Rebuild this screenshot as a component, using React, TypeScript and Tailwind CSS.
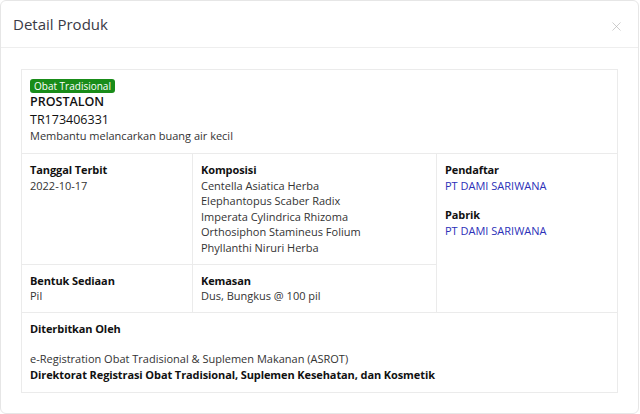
import { X } from "lucide-react";

const komposisi = [
  "Centella Asiatica Herba",
  "Elephantopus Scaber Radix",
  "Imperata Cylindrica Rhizoma",
  "Orthosiphon Stamineus Folium",
  "Phyllanthi Niruri Herba",
];

function Label({ children }: { children: React.ReactNode }) {
  return <p className="font-bold tracking-[-0.1px] text-[#111]">{children}</p>;
}

export default function App() {
  return (
    <div
      className="h-[414px] w-[640px] bg-white text-[#333]"
      style={{ fontFamily: "'Open Sans', 'Noto Sans', sans-serif" }}
    >
      <div className="flex h-[414px] w-[639px] flex-col rounded-md border border-[#e6e6e6] bg-white">
        <div className="flex h-[47px] items-center justify-between border-b border-[#eeeeee] pl-3 pr-[14px]">
          <h1 className="text-[15px] font-medium text-[#3a3a46]">Detail Produk</h1>
          <X size={15} strokeWidth={1} className="mt-[5px] text-[#b0b0b0]" />
        </div>

        <div className="px-5 pt-[21px]">
          <div className="grid grid-cols-[170px_243px_1fr] gap-px border border-[#ebebeb] bg-[#ebebeb] text-[11px] leading-[15.6px]">
            <div className="col-span-3 bg-white px-2 pb-[10px] pt-[9px]">
              <div className="w-fit rounded-[3px] bg-[#198c19] px-[4px] text-[10px] leading-[14px] text-white">
                Obat Tradisional
              </div>
              <p className="text-[12.5px] font-semibold leading-[18px] text-[#111]">PROSTALON</p>
              <p className="text-[12.5px] font-medium leading-[17px] text-[#111]">TR173406331</p>
              <p className="leading-[15px]">Membantu melancarkan buang air kecil</p>
            </div>

            <div className="bg-white px-2 py-2">
              <Label>Tanggal Terbit</Label>
              <p>2022-10-17</p>
            </div>
            <div className="bg-white px-2 py-2">
              <Label>Komposisi</Label>
              {komposisi.map((k) => (
                <p key={k}>{k}</p>
              ))}
            </div>
            <div className="row-span-2 bg-white px-2 py-2">
              <Label>Pendaftar</Label>
              <p className="text-[#2c30b8]">PT DAMI SARIWANA</p>
              <div className="mt-[14px]">
                <Label>Pabrik</Label>
                <p className="text-[#2c30b8]">PT DAMI SARIWANA</p>
              </div>
            </div>

            <div className="bg-white px-2 py-2">
              <Label>Bentuk Sediaan</Label>
              <p>Pil</p>
            </div>
            <div className="bg-white px-2 py-2">
              <Label>Kemasan</Label>
              <p>Dus, Bungkus @ 100 pil</p>
            </div>

            <div className="col-span-3 bg-white px-2 pb-[9px] pt-2">
              <Label>Diterbitkan Oleh</Label>
              <p className="mt-[15px]">e-Registration Obat Tradisional &amp; Suplemen Makanan (ASROT)</p>
              <Label>
                Direktorat Registrasi Obat Tradisional, Suplemen Kesehatan, dan Kosmetik
              </Label>
            </div>
          </div>
        </div>
      </div>
    </div>
  );
}
